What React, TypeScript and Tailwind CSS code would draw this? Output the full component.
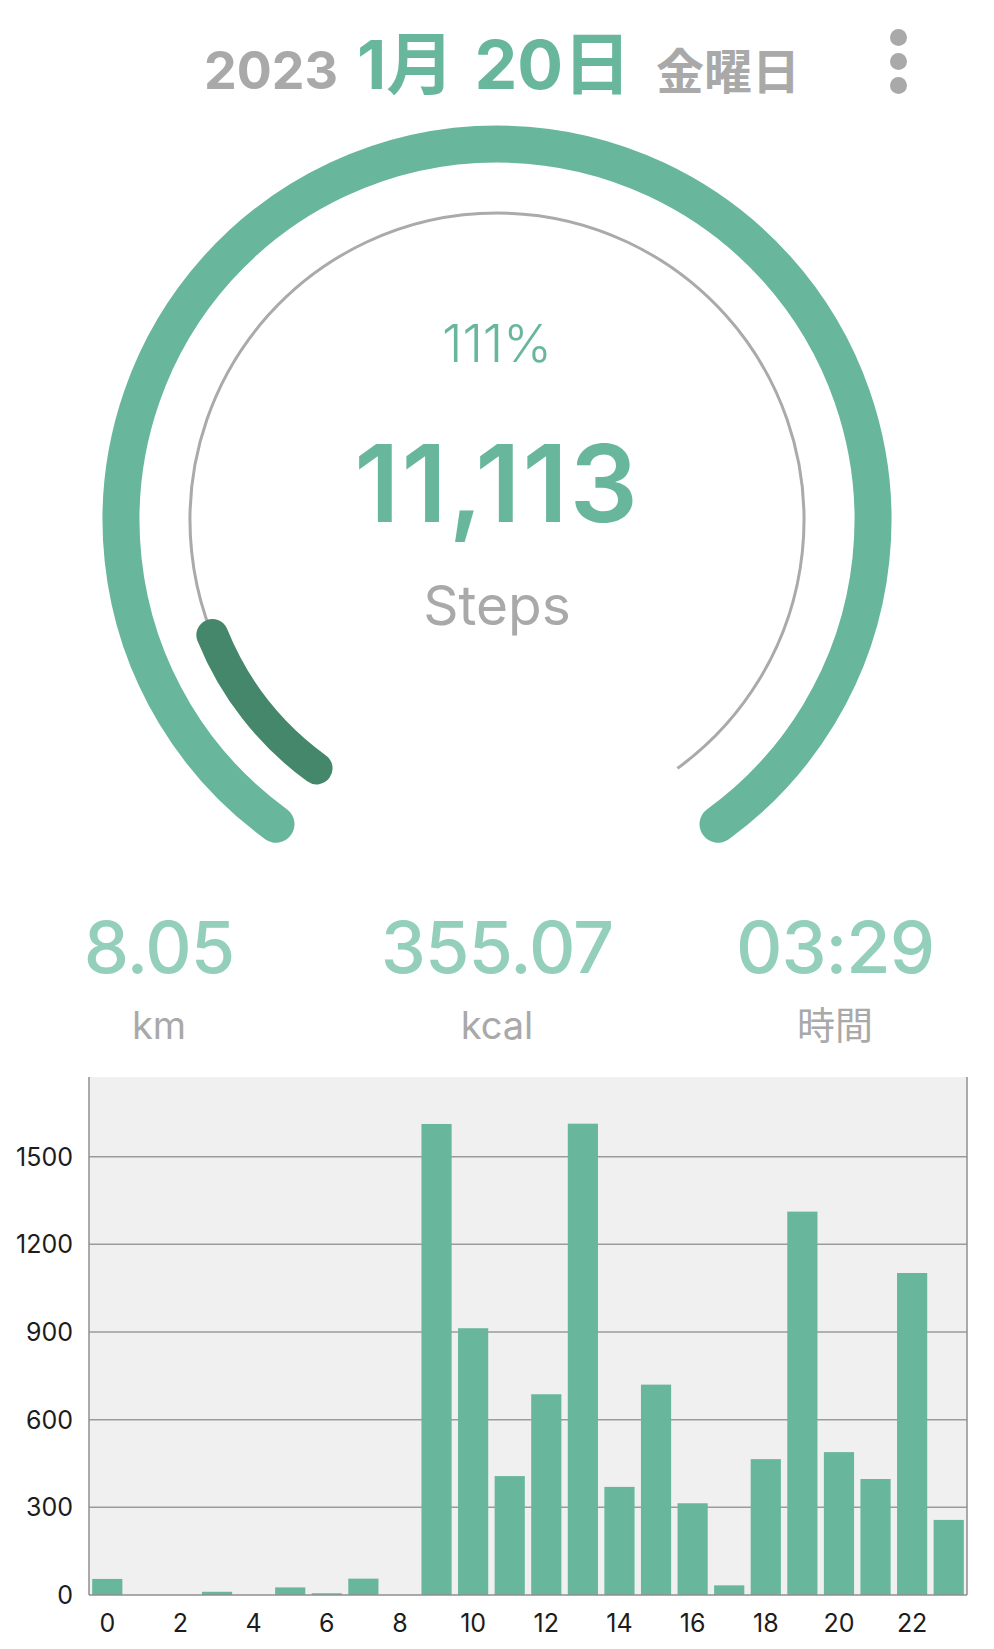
import React from "react";

const MINT = "#68b79d";
const DARK = "#44876a";

const data = [55, 0, 0, 11, 0, 26, 6, 56, 0, 1612, 913, 407, 687, 1613, 370, 720, 314, 33, 465, 1312, 489, 397, 1102, 257];

function Gauge() {
  const cx = 400;
  const cy = 400;
  const pt = (r: number, degFromBottom: number, side: number) => {
    const a = (degFromBottom * Math.PI) / 180;
    return [cx + side * r * Math.sin(a), cy + r * Math.cos(a)];
  };
  const ro = 376;
  const ri = 307;
  const [olx, oly] = pt(ro, 36, -1);
  const [orx, ory] = pt(ro, 36, 1);
  const [ilx, ily] = pt(ri, 36, -1);
  const [irx, iry] = pt(ri, 36, 1);
  const [dx, dy] = pt(ri, 68, -1);
  return (
    <svg width={800} height={730} viewBox="0 0 800 730" className="block mx-auto">
      <path
        d={`M ${olx} ${oly} A ${ro} ${ro} 0 1 1 ${orx} ${ory}`}
        fill="none"
        stroke={MINT}
        strokeWidth={37}
        strokeLinecap="round"
      />
      <path
        d={`M ${ilx} ${ily} A ${ri} ${ri} 0 1 1 ${irx} ${iry}`}
        fill="none"
        stroke="#aaaaaa"
        strokeWidth={3}
      />
      <path
        d={`M ${ilx} ${ily} A ${ri} ${ri} 0 0 1 ${dx} ${dy}`}
        fill="none"
        stroke={DARK}
        strokeWidth={32}
        strokeLinecap="round"
      />
    </svg>
  );
}

function Chart() {
  const left = 89;
  const right = 967;
  const top = 17;
  const base = 535;
  const ppu = 0.2922;
  const slot = (right - left) / 24;
  const grid = [300, 600, 900, 1200, 1500];
  return (
    <svg width={994} height={589} viewBox="0 0 994 589" className="block">
      <rect x={left} y={top} width={right - left} height={base - top} fill="#f0f0f0" />
      {grid.map((v) => (
        <line key={v} x1={left} x2={right} y1={base - v * ppu} y2={base - v * ppu} stroke="#9b9b9b" strokeWidth={1.5} />
      ))}
      {data.map((v, i) => {
        const h = v * ppu;
        return <rect key={i} x={left + slot * i + 3.2} y={base - h} width={slot - 6.4} height={h} fill={MINT} />;
      })}
      <line x1={left} x2={left} y1={top} y2={base} stroke="#8f8f8f" strokeWidth={1.5} />
      <line x1={right} x2={right} y1={top} y2={base} stroke="#8f8f8f" strokeWidth={1.5} />
      <line x1={left} x2={right} y1={base} y2={base} stroke="#8f8f8f" strokeWidth={1.5} />
      {[0, ...grid].map((v) => (
        <text
          key={v}
          x={73}
          y={base - v * ppu + 9}
          textAnchor="end"
          fontSize={25}
          fill="#1c1c1c"
          fontFamily="Inter, 'Liberation Sans', sans-serif"
        >
          {v}
        </text>
      ))}
      {data.map((_, i) =>
        i % 2 === 0 ? (
          <text
            key={i}
            x={left + slot * (i + 0.5)}
            y={572}
            textAnchor="middle"
            fontSize={25}
            fill="#1c1c1c"
            fontFamily="Inter, 'Liberation Sans', sans-serif"
          >
            {i}
          </text>
        ) : null
      )}
    </svg>
  );
}

function Stat({ value, label }: { value: string; label: string }) {
  return (
    <div className="flex flex-col items-center">
      <div className="text-[72px] leading-[72px] font-medium text-[#93cfbb] tracking-[-1px]">{value}</div>
      <div className="mt-[23px] h-[40px] text-[38px] leading-[38px] text-[#a9a9a9]">{label}</div>
    </div>
  );
}

export default function App() {
  return (
    <div
      className="w-[994px] h-[1649px] bg-white overflow-hidden"
      style={{ fontFamily: "Inter, 'Noto Sans CJK JP', sans-serif" }}
    >
      {/* Header */}
      <div className="relative h-[120px]">
        <div className="flex justify-center items-baseline pt-[30px] pl-[10px]">
          <span className="text-[52px] leading-none font-bold text-[#a9a9a9]">2023</span>
          <span className="ml-[19px] text-[68px] leading-none font-bold text-[#68b79d]">1月</span>
          <span className="ml-[20px] text-[68px] leading-none font-bold text-[#68b79d]">20日</span>
          <span className="ml-[25px] text-[48px] leading-none font-bold text-[#a9a9a9]">金曜日</span>
        </div>
        <div className="absolute left-[890px] top-[29px] flex flex-col gap-[7px]">
          <div className="w-[17px] h-[17px] rounded-full bg-[#a9a9a9]" />
          <div className="w-[17px] h-[17px] rounded-full bg-[#a9a9a9]" />
          <div className="w-[17px] h-[17px] rounded-full bg-[#a9a9a9]" />
        </div>
      </div>

      {/* Gauge */}
      <div className="relative h-[730px]">
        <Gauge />
        <div className="absolute inset-x-0 top-[198px] flex flex-col items-center">
          <div className="text-[52px] leading-[52px] font-light text-[#68b79d]">111%</div>
          <div className="mt-[60px] text-[107px] leading-[107px] font-semibold text-[#68b79d] tracking-[2px]">11,113</div>
          <div className="mt-[41px] text-[55px] leading-[55px] text-[#a9a9a9]">Steps</div>
        </div>
      </div>

      {/* Stats */}
      <div className="h-[210px] overflow-hidden">
        <div className="grid grid-cols-3 mx-[-10px] pt-[61px]">
          <Stat value="8.05" label="km" />
          <Stat value="355.07" label="kcal" />
          <Stat value="03:29" label="時間" />
        </div>
      </div>

      {/* Chart */}
      <Chart />
    </div>
  );
}
